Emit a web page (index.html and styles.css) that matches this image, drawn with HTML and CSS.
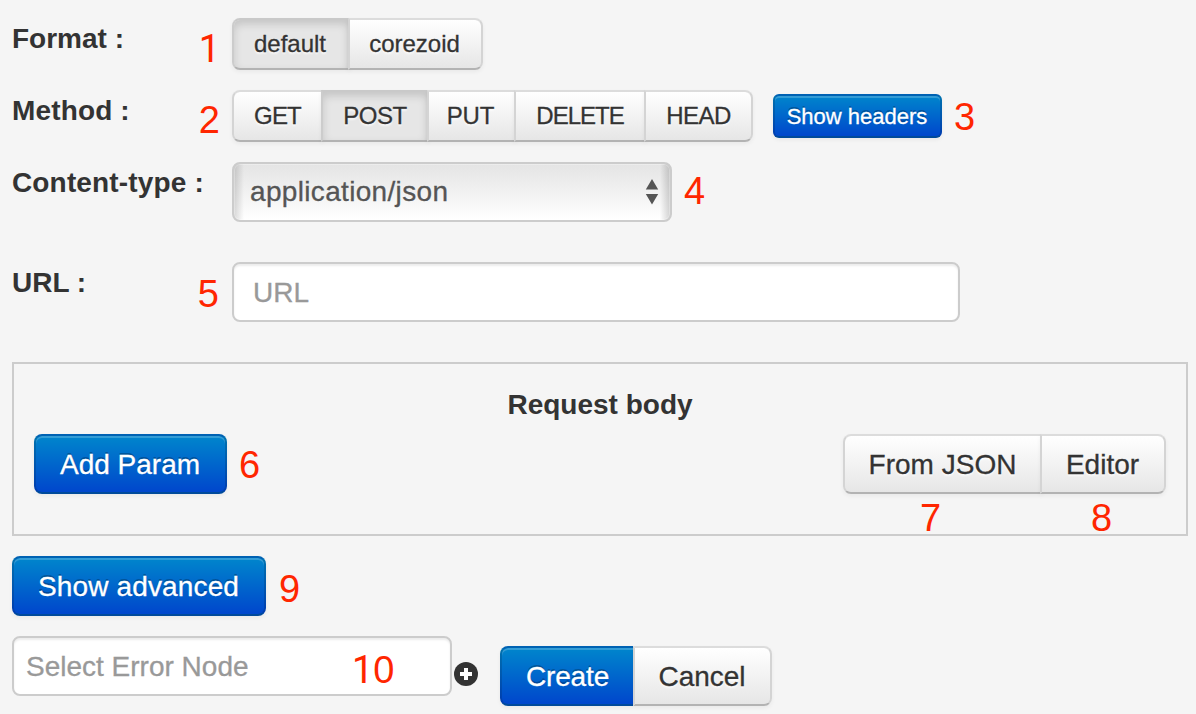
FILE: index.html
```html
<!DOCTYPE html>
<html lang="en">
<head>
<meta charset="utf-8">
<title>API call settings</title>
<link rel="stylesheet" href="styles.css">
</head>
<body>
<main class="form">
  <div class="row row-format">
    <div class="label"><span>Format :</span><b class="num num-1 one">1</b></div>
    <div class="group">
      <button class="btn small active w-default">default</button><button class="btn small w-corezoid">corezoid</button>
    </div>
  </div>
  <div class="row row-method">
    <div class="label"><span class="method-text">Method :</span><b class="num num-2">2</b></div>
    <div class="group">
      <button class="btn small w-get">GET</button><button class="btn small active w-post">POST</button><button class="btn small w-put">PUT</button><button class="btn small w-delete">DELETE</button><button class="btn small w-head">HEAD</button>
    </div>
    <button class="btn primary mini">Show headers</button>
    <b class="num num-3">3</b>
  </div>
  <div class="row row-type">
    <div class="label"><span class="type-text">Content-type :</span></div>
    <div class="select"><span class="select-text">application/json</span>
      <svg class="arrows" viewBox="0 0 14 26" width="14" height="26"><path d="M7 0L13.2 10.5H.8zM.8 15H13.2L7 25.5z" fill="#555"/></svg>
    </div>
    <b class="num num-4">4</b>
  </div>
  <div class="row row-url">
    <div class="label"><span>URL :</span><b class="num num-5">5</b></div>
    <div class="input url"><span>URL</span></div>
  </div>
  <section class="body-box">
    <h2>Request body</h2>
    <div class="body-actions">
      <button class="btn primary w-add">Add Param</button>
      <b class="num num-6">6</b>
      <div class="group right">
        <button class="btn w-json">From JSON<b class="num num-7">7</b></button><button class="btn w-editor">Editor<b class="num num-8">8</b></button>
      </div>
    </div>
  </section>
  <div class="row advanced">
    <button class="btn primary w-adv">Show advanced</button>
    <b class="num num-9">9</b>
  </div>
  <div class="row footer">
    <div class="input error"><span>Select Error Node</span><b class="num num-10"><span class="one">1</span>0</b></div>
    <svg class="plus" viewBox="0 0 24 24" width="24" height="24"><circle cx="12" cy="12" r="12" fill="#333"/><path d="M10 6h4v4h4v4h-4v4h-4v-4H6v-4h4z" fill="#fff"/></svg>
    <div class="group end">
      <button class="btn primary w-create">Create</button><button class="btn w-cancel">Cancel</button>
    </div>
  </div>
</main>
</body>
</html>
```
FILE: styles.css
```css
* { box-sizing: border-box; }
body {
  margin: 0;
  background: #f5f5f5;
  color: #333;
  font: 28px/40px "Liberation Sans", Arial, sans-serif;
}
.form { width: 1196px; height: 714px; padding: 18px 8px 0 12px; overflow: hidden; }
.row { display: flex; align-items: flex-start; }
.row-format, .row-method { height: 72px; }
.row-type { height: 100px; }
.row-url { height: 100px; }
.label { width: 220px; flex: none; display: flex; justify-content: space-between; align-items: flex-start; font-weight: bold; line-height: 42px; white-space: nowrap; }
.method-text, .type-text { letter-spacing: .15px; }
.num { font-size: 38px; line-height: 38px; font-weight: normal; color: #ff2600; text-shadow: none; letter-spacing: 0; -webkit-text-stroke: 0; }
.one { font-family: Roboto, "Liberation Sans", sans-serif; }
.num-1 { margin: 12px 12px 0 0; }
.num-2 { margin: 11px 12px 0 0; }
.num-3 { margin: 8px 0 0 12px; }
.num-4 { margin: 10px 0 0 12px; }
.num-5 { margin: 13px 13px 0 0; }
.num-6 { margin: 12px 0 0 12px; }
.num-9 { margin: 14px 0 0 13px; }
.group { display: flex; flex: none; }
.btn {
  position: relative;
  height: 60px;
  flex: none;
  margin: 0;
  padding: 1px 0 0;
  border: 2px solid;
  border-color: #dcdcdc #d4d4d4 #b3b3b3;
  border-radius: 8px;
  background: linear-gradient(#fff, #e6e6e6) padding-box;
  box-shadow: inset 0 2px 0 rgba(255,255,255,.2), 0 2px 4px rgba(0,0,0,.05);
  color: #333;
  font: inherit;
  text-shadow: 0 2px 2px rgba(255,255,255,.75);
  white-space: nowrap;
  -webkit-text-stroke: .3px;
}
.group .btn:first-child { border-radius: 8px 0 0 8px; }
.group .btn:last-child { border-radius: 0 8px 8px 0; }
.group .btn:not(:first-child):not(:last-child) { border-radius: 0; }
.group .btn + .btn { margin-left: -2px; }
.small { height: 52px; padding: 0 2px 0 0; font-size: 24px; }
.active { background: #e6e6e6; border-color: #c9c9c9 #ccc #b3b3b3; box-shadow: inset 0 4px 8px rgba(0,0,0,.15), 0 2px 4px rgba(0,0,0,.05); }
.primary {
  color: #fff;
  border-color: #0062b3 rgba(0,0,0,.14) #004a9b;
  background: linear-gradient(#08c, #04c) border-box;
  text-shadow: 0 -2px 0 rgba(0,0,0,.25);
}
.mini { width: 169px; height: 44px; margin: 4px 0 0 20px; padding: 1px 1px 0 0; border-radius: 6px; font-size: 22px; }
.w-default { width: 118px; }
.w-corezoid { width: 135px; }
.w-get { width: 91px; padding: 0; letter-spacing: -.8px; }
.w-post { width: 108px; padding: 0; letter-spacing: -.4px; }
.w-put { width: 89px; letter-spacing: -.2px; }
.w-delete { width: 132px; padding: 0; letter-spacing: -1px; }
.w-head { width: 109px; padding: 0; letter-spacing: -.5px; }
.w-add { width: 193px; padding-right: 1px; }
.w-json { width: 199px; }
.w-editor { width: 126px; padding-right: 1px; }
.w-adv { width: 254px; letter-spacing: .15px; padding-right: 1px; }
.w-create { width: 133px; letter-spacing: -.15px; }
.group .btn.w-create { border-right: 0; }
.group .btn.w-cancel { width: 139px; margin-left: 0; padding-right: 1px; }
.select, .input { height: 60px; border: 2px solid #ccc; border-radius: 8px; background: #fff; line-height: 58px; flex: none; -webkit-text-stroke: .3px; }
.select {
  width: 440px;
  display: flex;
  align-items: center;
  justify-content: space-between;
  padding: 0 11px 0 16px;
  color: #555;
  line-height: 56px;
  background: linear-gradient(90deg, rgba(0,0,0,.15), transparent 10px, transparent 426px, rgba(0,0,0,.17)), linear-gradient(#e4e4e4, #fff);
  box-shadow: inset 0 0 0 1px rgba(255,255,255,.3);
}
.select-text { letter-spacing: .33px; }
.input { color: #999; box-shadow: inset 0 2px 2px rgba(0,0,0,.075); }
.url { width: 728px; padding-left: 19px; }
.body-box { height: 174px; border: 2px solid #ccc; padding: 20px; }
h2 { margin: 0; font-size: 28px; line-height: 42px; text-align: center; }
.body-actions { display: flex; align-items: flex-start; margin-top: 8px; }
.right { margin-left: auto; }
.num-7, .num-8 { position: absolute; top: 63px; }
.num-7 { left: 75px; }
.num-8 { left: 49px; }
.advanced { padding-top: 20px; height: 100px; }
.error { width: 440px; padding-left: 12px; position: relative; }
.num-10 { position: absolute; left: 338px; top: 13px; }
.plus { margin: 26px 0 0 2px; flex: none; }
.end { margin: 10px 0 0 22px; }
```
